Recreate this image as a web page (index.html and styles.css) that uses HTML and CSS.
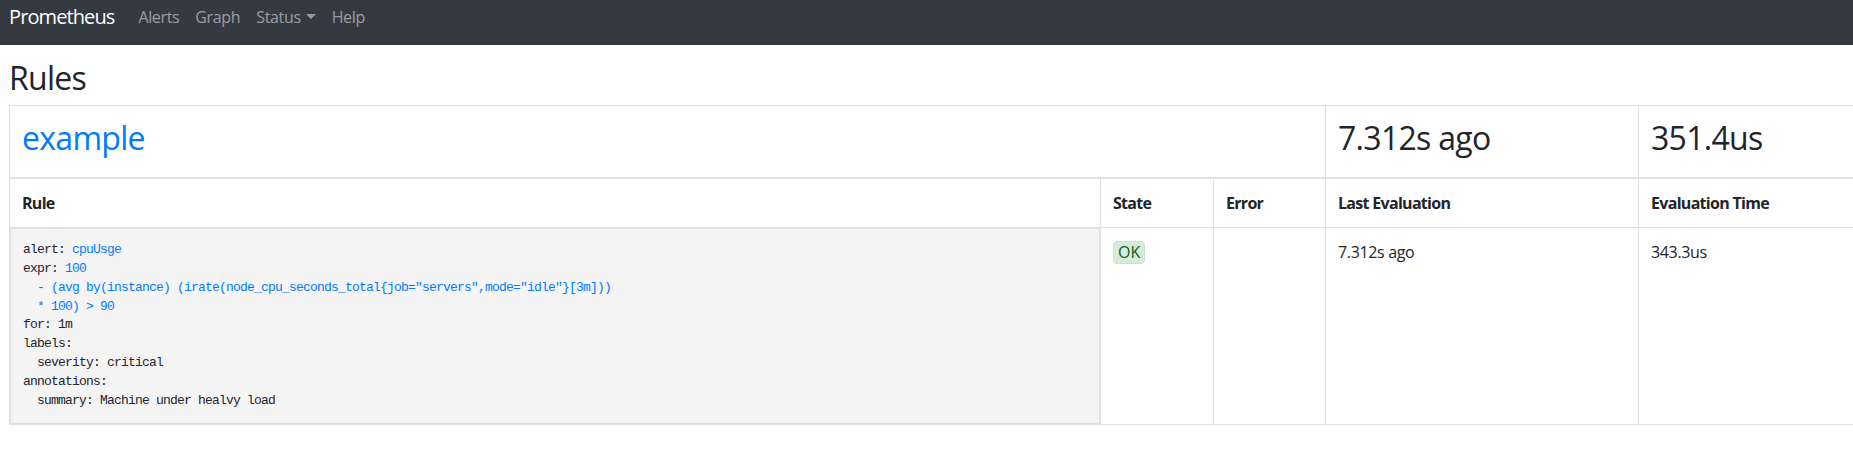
FILE: index.html
```html
<!DOCTYPE html>
<html lang="en">
<head>
<meta charset="utf-8">
<title>Prometheus Time Series Collection and Processing Server</title>
<link rel="stylesheet" href="styles.css">
</head>
<body>
<nav class="navbar">
  <a class="brand" href="#">Prometheus</a>
  <ul class="nav">
    <li><a class="nav-link" href="#">Alerts</a></li>
    <li><a class="nav-link" href="#">Graph</a></li>
    <li><a class="nav-link dropdown" href="#">Status</a></li>
    <li><a class="nav-link" href="#">Help</a></li>
  </ul>
</nav>
<main class="container">
  <h1 class="page-title">Rules</h1>
  <table class="rules">
    <colgroup>
      <col class="c-rule"><col class="c-state"><col class="c-error"><col class="c-last"><col class="c-time">
    </colgroup>
    <thead>
      <tr class="group-row">
        <td colspan="3"><h2><a class="group-link" href="#example">example</a></h2></td>
        <td><h2>7.312s ago</h2></td>
        <td><h2>351.4us</h2></td>
      </tr>
    </thead>
    <tbody>
      <tr class="head-row">
        <td>Rule</td>
        <td>State</td>
        <td>Error</td>
        <td>Last Evaluation</td>
        <td>Evaluation Time</td>
      </tr>
      <tr class="rule-row">
        <td class="rule-cell"><pre class="rule-def">alert: <a class="val" href="#">cpuUsge</a>
expr: <a class="val" href="#">100
  - (avg by(instance) (irate(node_cpu_seconds_total{job="servers",mode="idle"}[3m]))
  * 100) &gt; 90</a>
for: 1m
labels:
  severity: critical
annotations:
  summary: Machine under healvy load</pre></td>
        <td><span class="state-ok">OK</span></td>
        <td></td>
        <td>7.312s ago</td>
        <td>343.3us</td>
      </tr>
    </tbody>
  </table>
</main>
</body>
</html>
```
FILE: styles.css
```css
html, body {
  margin: 0;
  padding: 0;
}
body {
  font-family: "Open Sans", "Noto Sans", sans-serif;
  font-size: 16px;
  line-height: 1.5;
  letter-spacing: -0.35px;
  color: #212529;
  background: #fff;
  overflow: hidden;
}
a {
  text-decoration: none;
}
.navbar {
  display: flex;
  align-items: flex-start;
  height: 45px;
  padding: 0 9px;
  background: #343a40;
}
.brand {
  color: #fff;
  font-size: 20px;
  line-height: 30px;
  letter-spacing: -0.9px;
  margin: 2px 16px 0 0;
}
.nav {
  display: flex;
  list-style: none;
  margin: 0;
  padding: 0;
}
.nav-link {
  display: block;
  padding: 5px 8px 11px;
  color: rgba(255, 255, 255, 0.5);
}
.dropdown::after {
  content: "";
  display: inline-block;
  margin-left: 5px;
  vertical-align: 4px;
  border-top: 5px solid;
  border-left: 5px solid transparent;
  border-right: 5px solid transparent;
}
.container {
  padding: 14px 0 0 9px;
}
.page-title {
  margin: 0 0 8px;
  font-size: 32px;
  font-weight: 500;
  line-height: 1.2;
  letter-spacing: -0.7px;
}
.rules {
  border-collapse: collapse;
  table-layout: fixed;
  width: 1860px;
}
.c-rule { width: 1091px; }
.c-state { width: 113px; }
.c-error { width: 112px; }
.c-last { width: 313px; }
.c-time { width: 231px; }
.rules td {
  border: 1px solid #dee2e6;
  padding: 12px;
  vertical-align: top;
}
.rules thead td {
  border-bottom-width: 2px;
}
.rules h2 {
  margin: 1px 0 7px;
  font-size: 32px;
  font-weight: 500;
  line-height: 1.2;
  letter-spacing: -0.7px;
}
.group-link {
  color: #007bff;
}
.head-row td {
  font-weight: 700;
  letter-spacing: -0.7px;
}
.rules td.rule-cell {
  padding: 0;
  background: #f4f4f4;
}
.rule-def {
  margin: 0;
  padding: 12px;
  border: 1px solid #dee2e6;
  font-family: "Liberation Mono", monospace;
  font-size: 13px;
  letter-spacing: -0.8px;
  line-height: 18.9px;
  color: #212529;
}
.val {
  color: #007bff;
}
.state-ok {
  display: inline-block;
  padding: 0 4px;
  line-height: 21px;
  letter-spacing: 0;
  background: #d4edda;
  border: 1px solid #c3e6cb;
  border-radius: 4px;
  color: #155724;
}
```
